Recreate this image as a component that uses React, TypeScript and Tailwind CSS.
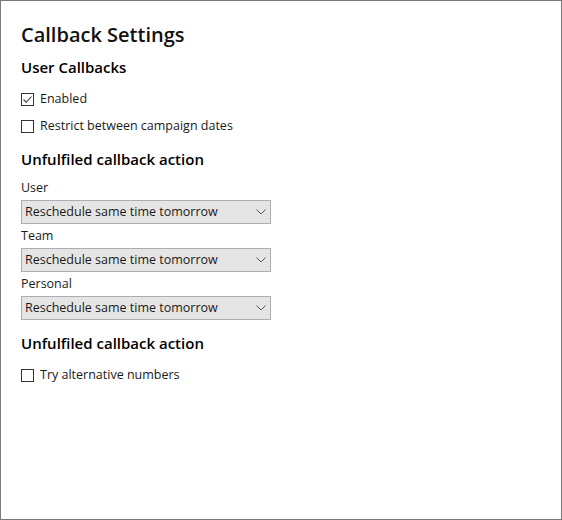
import type { ReactNode } from "react";

const font = { fontFamily: '"Segoe UI", "Open Sans", "Noto Sans", sans-serif' };

function CheckRow({ label, checked = false, className = "" }: { label: string; checked?: boolean; className?: string }) {
  return (
    <label className={`flex h-[20px] items-center gap-[6px] text-[12.5px] text-[#1a1a1a] ${className}`}>
      <span className="flex h-[13px] w-[13px] items-center justify-center border border-[#333333] bg-white">
        {checked && (
          <svg width="11" height="11" viewBox="0 0 11 11" fill="none">
            <path d="M1.5 5.5 L4.2 8.2 L9.5 2.5" stroke="#444444" strokeWidth="1.1" />
          </svg>
        )}
      </span>
      <span>{label}</span>
    </label>
  );
}

function Heading({ children, className = "" }: { children: ReactNode; className?: string }) {
  return <h2 className={`h-[22px] text-[15px] leading-[22px] font-semibold text-black ${className}`}>{children}</h2>;
}

function SelectField({ label, className = "" }: { label: string; className?: string }) {
  return (
    <div className={className}>
      <div className="h-[18px] text-[12.5px] leading-[18px] text-[#1a1a1a]">{label}</div>
      <div className="mt-[3px] flex h-[24px] w-[250px] items-center justify-between border border-[#adadad] bg-[#e5e5e5] pl-[3px] pr-[4px] text-[12.5px] text-[#1a1a1a]">
        <span>Reschedule same time tomorrow</span>
        <svg width="10" height="6" viewBox="0 0 10 6" fill="none">
          <path d="M0.5 0.5 L5 5 L9.5 0.5" stroke="#555555" strokeWidth="1" />
        </svg>
      </div>
    </div>
  );
}

export default function App() {
  return (
    <div style={font} className="h-[520px] w-[562px] border border-[#7a7a7a] bg-white px-[20px] pt-[20px]">
      <h1 className="h-[28px] text-[20px] leading-[28px] font-semibold text-[#111111]">Callback Settings</h1>
      <Heading className="mt-[7px]">User Callbacks</Heading>
      <CheckRow className="mt-[11px]" label="Enabled" checked />
      <CheckRow className="mt-[7px]" label="Restrict between campaign dates" />
      <Heading className="mt-[12px]">Unfulfiled callback action</Heading>
      <SelectField className="mt-[9px]" label="User" />
      <SelectField className="mt-[3px]" label="Team" />
      <SelectField className="mt-[3px]" label="Personal" />
      <Heading className="mt-[12px]">Unfulfiled callback action</Heading>
      <CheckRow className="mt-[11px]" label="Try alternative numbers" />
    </div>
  );
}
